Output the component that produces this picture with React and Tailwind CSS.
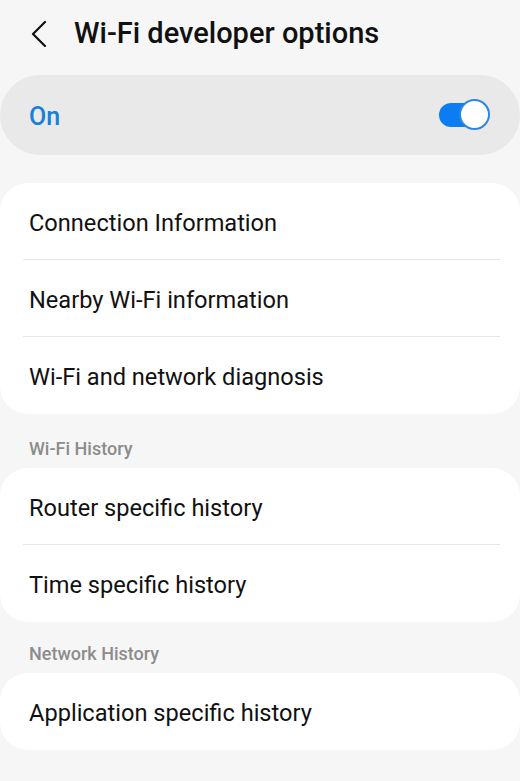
import React from "react";

const font = { fontFamily: "Roboto, 'Noto Sans', sans-serif" };

function Row({ label, last }) {
  return (
    <div className="pl-[23px] pr-[20px]">
      <div
        className={
          "h-[77px] flex items-center pl-[6px] pt-[5px] text-[23.6px] text-[#111] " +
          (last ? "" : "border-b border-[#e6e6e6]")
        }
      >
        {label}
      </div>
    </div>
  );
}

function Card({ items }) {
  return (
    <div className="bg-white rounded-[28px] overflow-hidden">
      {items.map((it, i) => (
        <Row key={i} label={it} last={i === items.length - 1} />
      ))}
    </div>
  );
}

function SectionLabel({ children, h }) {
  return (
    <div className={"flex items-end pl-[29px] pb-[6px] text-[18px] font-medium text-[#8c8c8c] " + h}>
      {children}
    </div>
  );
}

export default function App() {
  return (
    <div className="w-[520px] h-[781px] bg-[#f6f6f6] overflow-hidden" style={font}>
      {/* Header */}
      <div className="h-[75px] flex items-center pb-[8px]">
        <svg width="16" height="26" viewBox="0 0 16 26" className="ml-[31px]">
          <polyline points="14,1 2,13 14,25" fill="none" stroke="#111" strokeWidth="2.2" strokeLinecap="round" strokeLinejoin="round" />
        </svg>
        <h1 className="ml-[27px] text-[29px] font-medium text-[#111]">Wi-Fi developer options</h1>
      </div>

      {/* Master switch */}
      <div className="h-[80px] bg-[#e9e9e9] rounded-[40px] flex items-center justify-between pl-[29px] pr-[30px]">
        <span className="pt-[3px] text-[25px] font-medium text-[#1a7fd4]">On</span>
        <div className="relative w-[51px] h-[32px] flex items-center">
          <div className="w-[44px] h-[24px] rounded-full bg-[#0b7cf2]" />
          <div className="absolute right-0 top-0 w-[31px] h-[31px] rounded-full bg-white border-2 border-[#2a86e6]" />
        </div>
      </div>

      <div className="h-[28px]" />
      <Card items={["Connection Information", "Nearby Wi-Fi information", "Wi-Fi and network diagnosis"]} />

      <SectionLabel h="h-[54px]">Wi-Fi History</SectionLabel>
      <Card items={["Router specific history", "Time specific history"]} />

      <SectionLabel h="h-[51px]">Network History</SectionLabel>
      <Card items={["Application specific history"]} />
    </div>
  );
}
